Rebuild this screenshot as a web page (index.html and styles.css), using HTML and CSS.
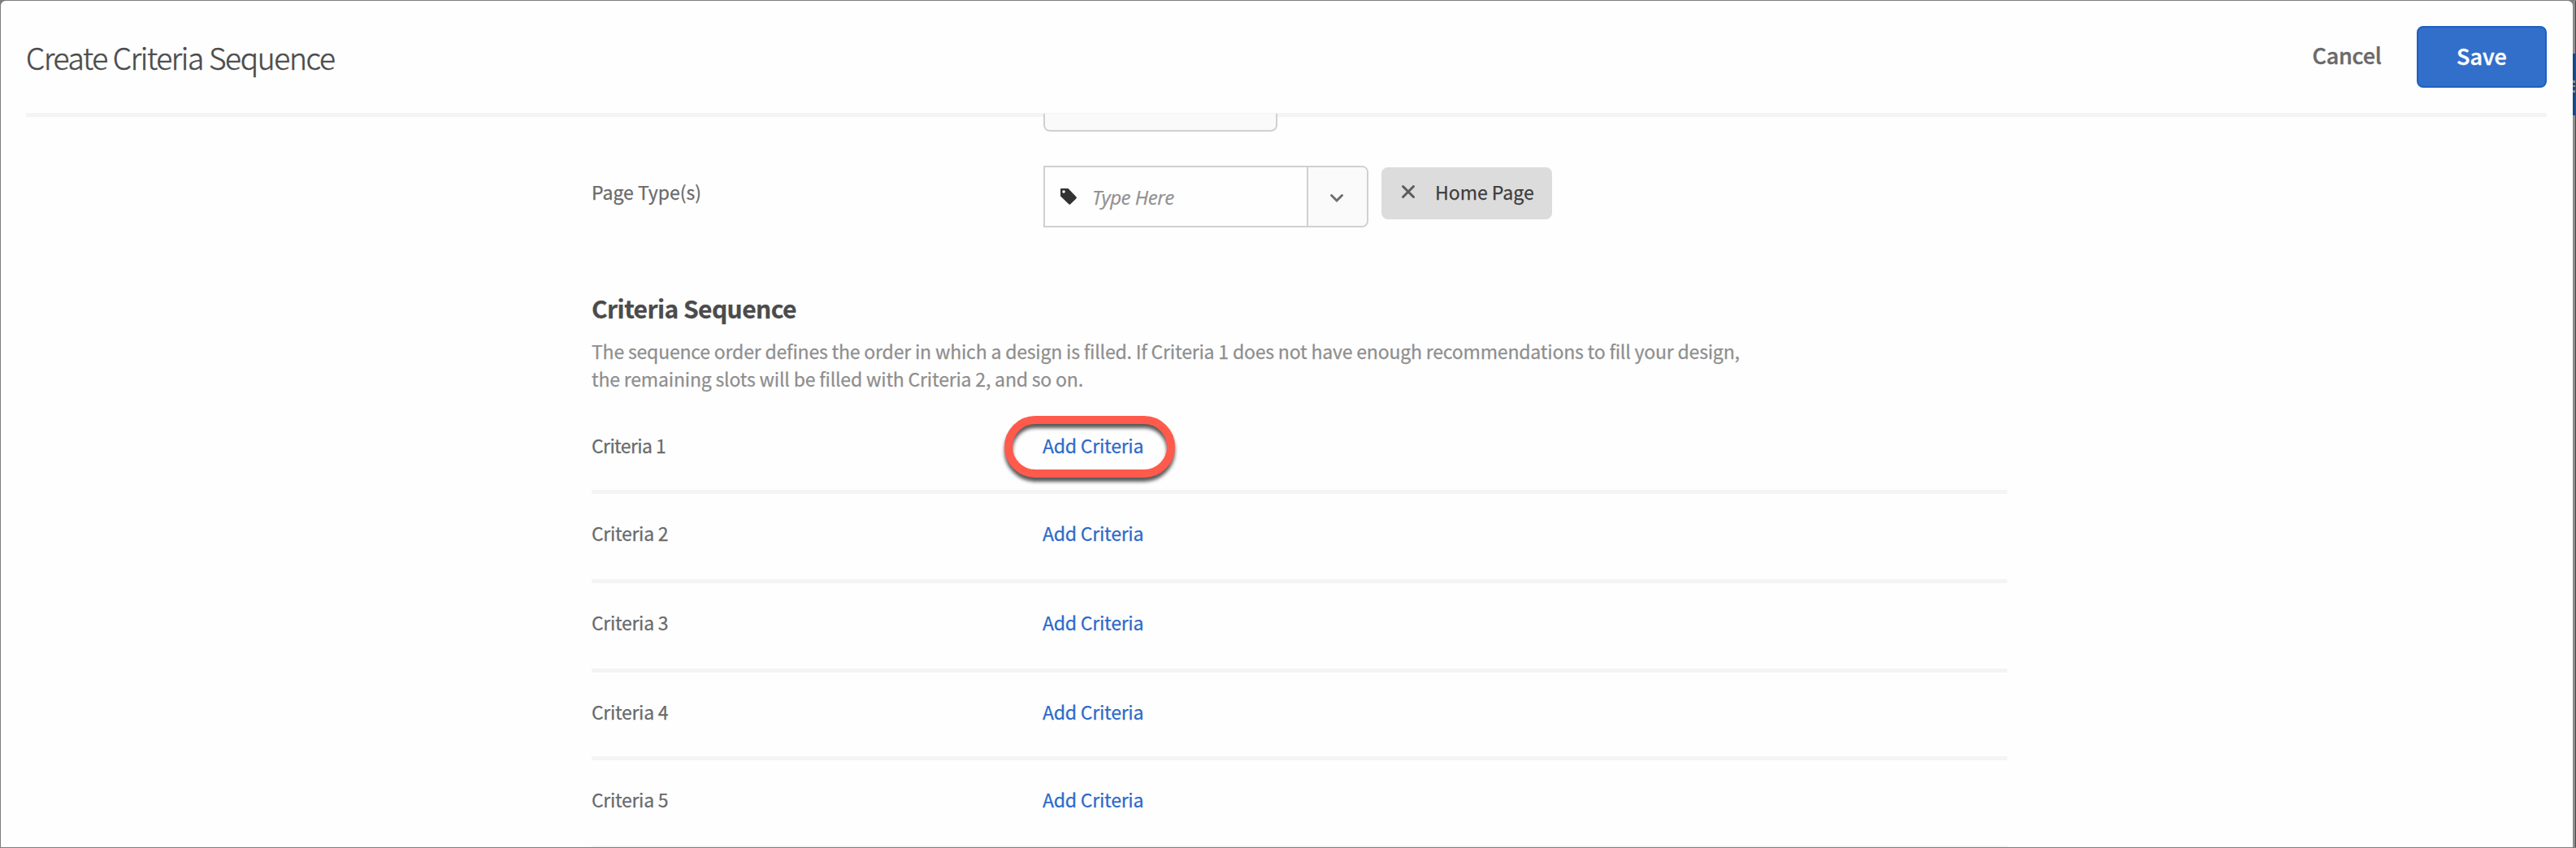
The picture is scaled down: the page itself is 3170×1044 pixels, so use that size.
FILE: index.html
```
<!DOCTYPE html>
<html lang="en">
<head>
<meta charset="utf-8">
<title>Create Criteria Sequence</title>
<link rel="stylesheet" href="styles.css">
</head>
<body>
<div class="backdrop">
  <main class="dialog">
    <header class="header">
      <h1 class="title">Create Criteria Sequence</h1>
      <div class="actions">
        <button class="btn btn-quiet">Cancel</button>
        <button class="btn btn-primary">Save</button>
      </div>
    </header>
    <div class="content">
      <div class="select-stub"></div>
      <div class="field">
        <div class="label">Page Type(s)</div>
        <div class="combo">
          <div class="combo-input">
            <svg class="tag-icon" width="20" height="20" viewBox="0 0 20 20"><path fill="#323232" fill-rule="evenodd" d="M1 0H9.5L19.3 10.2Q20.4 11.3 19.3 12.4L12.4 19.3Q11.3 20.4 10.2 19.3L0 9.500V1Q0 0 1 0ZM4 2.200a1.800 1.800 0 1 0 0 3.600a1.800 1.800 0 1 0 0-3.600Z"/></svg>
            <span class="placeholder">Type Here</span>
          </div>
          <div class="combo-toggle">
            <svg width="18" height="12" viewBox="0 0 18 12"><path d="M2.500 2.500L9 9L15.500 2.500" fill="none" stroke="#6e6e6e" stroke-width="3" stroke-linecap="round"/></svg>
          </div>
        </div>
        <div class="chip">
          <svg width="18" height="18" viewBox="0 0 18 18"><path d="M2.500 2.500L15.500 15.500M15.500 2.500L2.500 15.500" fill="none" stroke="#5c5c5c" stroke-width="3" stroke-linecap="round"/></svg>
          <span>Home Page</span>
        </div>
      </div>
      <h2 class="section-title">Criteria Sequence</h2>
      <p class="description">The sequence order defines the order in which a design is filled. If Criteria 1 does not have enough recommendations to fill your design,<br>the remaining slots will be filled with Criteria 2, and so on.</p>
      <div class="rows">
        <div class="row row-first"><span class="row-name">Criteria 1</span><span class="link">Add Criteria<i class="ring"></i></span></div>
        <div class="row"><span class="row-name">Criteria 2</span><span class="link">Add Criteria</span></div>
        <div class="row"><span class="row-name">Criteria 3</span><span class="link">Add Criteria</span></div>
        <div class="row row-short"><span class="row-name">Criteria 4</span><span class="link">Add Criteria</span></div>
        <div class="row"><span class="row-name">Criteria 5</span><span class="link">Add Criteria</span></div>
      </div>
    </div>
  </main>
  <div class="page-edge"><div class="edge-button"></div></div>
</div>
</body>
</html>
```
FILE: styles.css
```
* { box-sizing: border-box; }
body {
  margin: 0;
  overflow: hidden;
  font-family: "Noto Sans CJK SC", "Open Sans", sans-serif;
  font-size: 23px;
  line-height: 34px;
  color: #6a6a6a;
  -webkit-text-stroke: .25px currentColor;
}
h1, h2, p { margin: 0; }
.backdrop {
  display: flex;
  width: 3170px;
  height: 1044px;
  padding: 1px 0 1px 1px;
  background: #7d7d7d;
}
.dialog {
  width: 3165px;
  height: 1042px;
  overflow: hidden;
  background: #fefefe;
  border-radius: 6px 6px 0 0;
}
.header {
  display: flex;
  justify-content: space-between;
  height: 143px;
  margin: 0 32px 0 31px;
  padding-top: 31px;
  border-bottom: 5px solid #f4f4f4;
}
.title {
  margin-top: 8px;
  font-size: 37px;
  font-weight: 300;
  line-height: 60px;
  letter-spacing: -1.28px;
  color: #4b4b4b;
  -webkit-text-stroke-width: .5px;
}
.actions { display: flex; }
.btn {
  height: 76px;
  padding: 0;
  font: 500 27px/70px "Noto Sans CJK SC", "Open Sans", sans-serif;
  text-align: center;
  -webkit-text-stroke: .4px currentColor;
}
.btn-quiet { width: 172px; padding-bottom: 4px; border: 0; background: none; color: #6a6a6a; letter-spacing: -0.2px; }
.btn-primary {
  width: 160px;
  padding-bottom: 2px;
  border: 2px solid #1f60bf;
  border-radius: 8px;
  background: #326fca;
  color: #fff;
}
.content { width: 1742px; margin-left: 727px; }
.select-stub {
  position: relative;
  width: 288px;
  height: 22px;
  margin: -4px 0 42px 556px;
  border: 2px solid #d0d0d0;
  border-top: 0;
  border-radius: 0 0 8px 8px;
  background: #fafafa;
}
.field { display: flex; height: 76px; }
.label { width: 556px; padding-top: 15px; }
.combo {
  display: flex;
  width: 400px;
  height: 76px;
  border: 2px solid #d0d0d0;
  border-radius: 0 8px 8px 0;
}
.combo-input {
  display: flex;
  width: 322px;
  padding: 26px 0 0 19px;
}
.placeholder {
  margin: -6px 0 0 19px;
  font-family: "Open Sans", sans-serif;
  font-size: 24px;
  font-style: italic;
  letter-spacing: -0.45px;
  color: #919191;
}
.combo-toggle {
  flex: 1;
  padding: 32px 0 0 26px;
  line-height: 0;
  border-left: 2px solid #d0d0d0;
  border-radius: 0 6px 6px 0;
  background: #fafafa;
}
.chip {
  display: flex;
  gap: 24px;
  width: 210px;
  height: 64px;
  margin: 2px 0 0 16px;
  padding: 13px 0 0 24px;
  border-radius: 8px;
  background: #dcdcdc;
  color: #3c3c3c;
}
.chip svg { margin-top: 8px; }
.section-title {
  margin-top: 76px;
  font-size: 30px;
  font-weight: 700;
  line-height: 46px;
  letter-spacing: -0.58px;
  color: #4b4b4b;
}
.description {
  margin-top: 13px;
  white-space: nowrap;
  letter-spacing: -0.18px;
  color: #8e8e8e;
}
.rows { margin-top: 15px; }
.row {
  display: flex;
  height: 110px;
  padding-top: 31px;
  border-bottom: 5px solid #f4f4f4;
}
.row-first { padding-top: 33px; }
.row-short { height: 108px; }
.row-name { width: 555px; letter-spacing: -0.3px; }
.row-first .row-name { letter-spacing: -0.6px; }
.link { position: relative; height: 34px; letter-spacing: -0.22px; color: #2c6acb; }
/* Callout around the first link */
.ring {
  position: absolute;
  left: -47px;
  top: -19px;
  width: 210px;
  height: 76px;
  border: 10px solid #ff5a4c;
  border-radius: 38px;
  filter: drop-shadow(0 5px 2px rgba(0, 0, 0, .65));
}
.page-edge { width: 4px; height: 1042px; padding-top: 65px; background: #8c8c8c; border-right: 1px solid #4a4a4a; }
.edge-button {
  height: 76px;
  background: linear-gradient(#8c8c8c 0 3px, #174684 3px 6px, #8c8c8c 6px 8px, #174684 8px 12px, #8c8c8c 12px 15px) 0 33px / 100% 15px no-repeat #174684;
}
```
